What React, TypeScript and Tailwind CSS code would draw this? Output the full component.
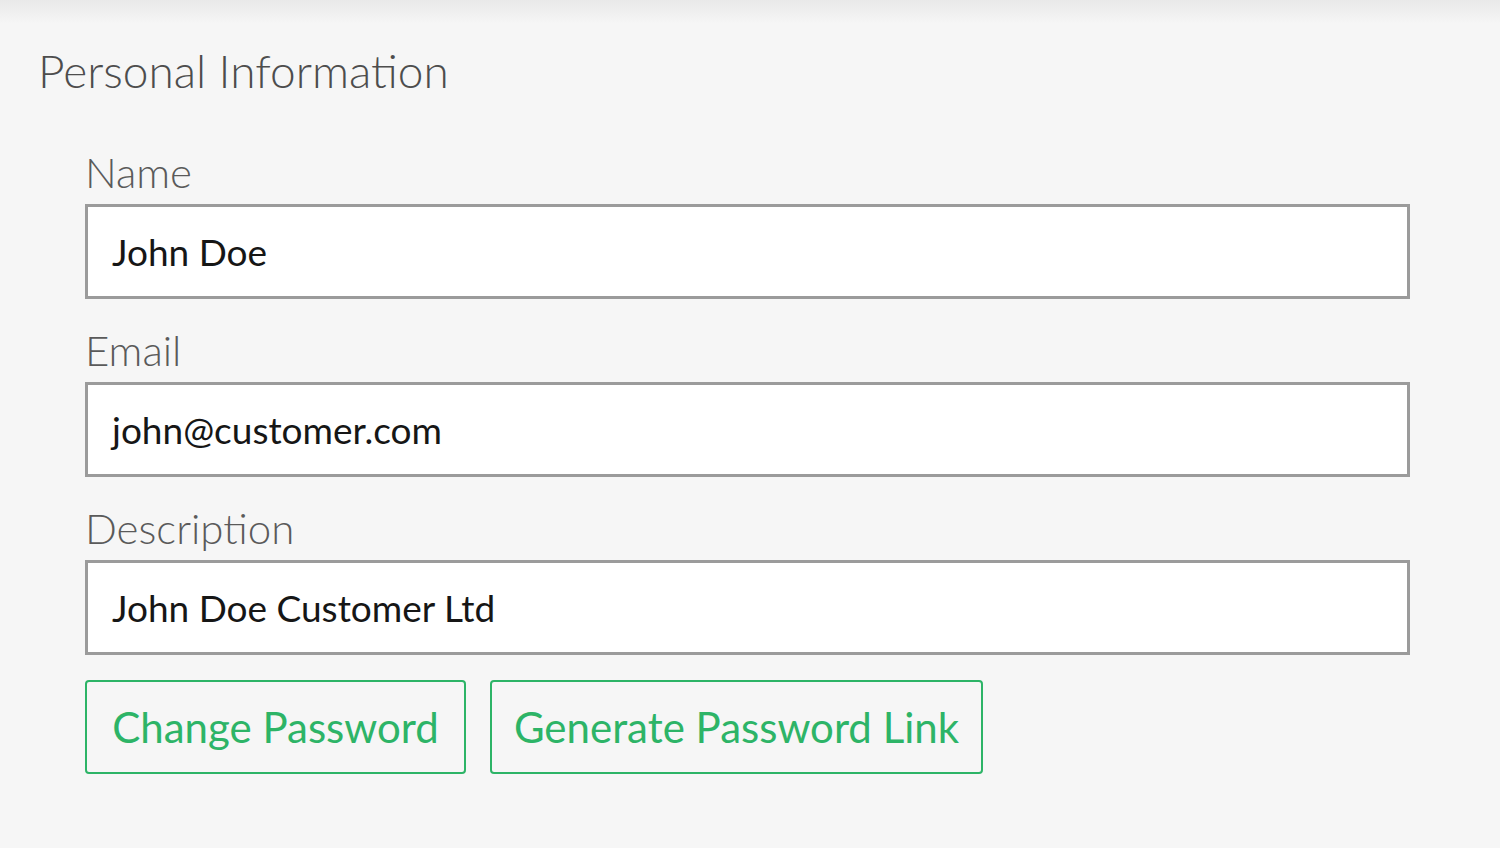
import React from "react";

const font = { fontFamily: "Lato, 'Noto Sans', sans-serif" };

function Field({ label, value }: { label: string; value: string }) {
  return (
    <div className="flex flex-col">
      <label className="text-[42px] leading-[50px] font-light text-[#5a5a5a] mb-[7px]">{label}</label>
      <div className="h-[95px] w-[1325px] border-[3px] border-[#9b9b9b] bg-white flex items-center pl-[24px]">
        <span className="text-[37px] leading-[45px] text-[#161616]">{value}</span>
      </div>
    </div>
  );
}

export default function App() {
  return (
    <div
      style={font}
      className="w-[1500px] h-[848px] overflow-hidden bg-[linear-gradient(to_bottom,#e9e9e9_0px,#f6f6f6_24px,#f6f6f6_100%)]"
    >
      <div className="pt-[43px] pl-[38px]">
        <h1 className="text-[46px] leading-[55px] font-light text-[#4d4d4d]">Personal Information</h1>
      </div>
      <div className="pl-[85px] pt-[49px] flex flex-col gap-[26px]">
        <Field label="Name" value="John Doe" />
        <Field label="Email" value="john@customer.com" />
        <Field label="Description" value="John Doe Customer Ltd" />
      </div>
      <div className="pl-[85px] pt-[25px] flex gap-[24px]">
        <button className="h-[94px] w-[381px] flex items-center justify-center border-2 border-[#2db467] rounded-[4px] text-[42px] leading-[50px] text-[#2db467]">
          Change Password
        </button>
        <button className="h-[94px] w-[493px] flex items-center justify-center border-2 border-[#2db467] rounded-[4px] text-[42px] leading-[50px] text-[#2db467]">
          Generate Password Link
        </button>
      </div>
    </div>
  );
}
